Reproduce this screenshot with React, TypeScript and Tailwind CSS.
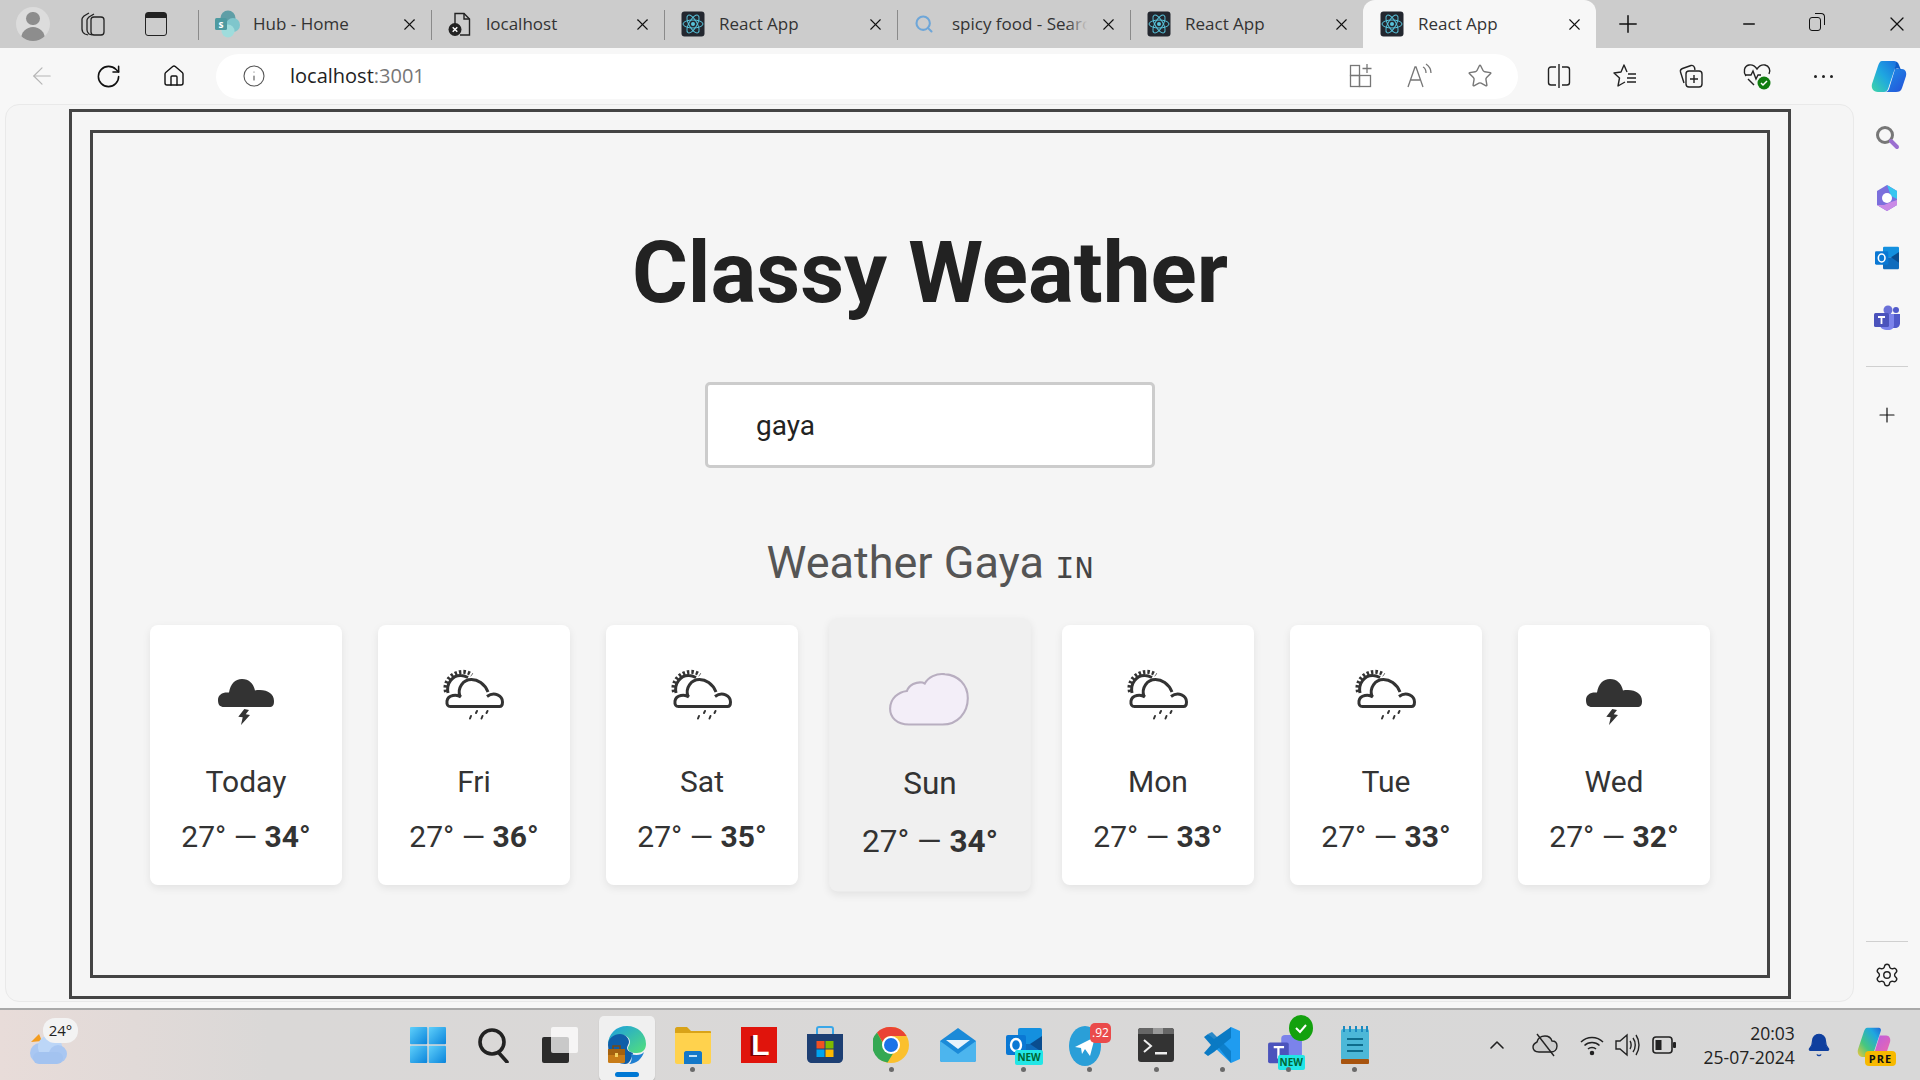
import React from "react";
import { ArrowLeft, RotateCw, Home, Info, Star, Plus, Search, X, Settings, ChevronUp, Minus, Bell } from "lucide-react";

const ui = { fontFamily: '"Open Sans", "Noto Sans", sans-serif' };
const roboto = { fontFamily: 'Roboto, "Liberation Sans", sans-serif' };

function ReactIcon() {
  return (
    <svg width="24" height="26" viewBox="0 0 24 26" className="shrink-0">
      <rect x="0.5" y="0.5" width="23" height="25" rx="3" fill="#23272f" />
      <g fill="none" stroke="#58c4dc" strokeWidth="1">
        <ellipse cx="12" cy="13" rx="10" ry="4" />
        <ellipse cx="12" cy="13" rx="10" ry="4" transform="rotate(60 12 13)" />
        <ellipse cx="12" cy="13" rx="10" ry="4" transform="rotate(120 12 13)" />
      </g>
      <circle cx="12" cy="13" r="2" fill="#58c4dc" />
    </svg>
  );
}

function SharePointIcon() {
  return (
    <svg width="26" height="28" viewBox="0 0 26 28" className="shrink-0">
      <circle cx="13" cy="8" r="7.5" fill="#5f9ea6" />
      <circle cx="18" cy="15" r="7" fill="#7fc6cc" />
      <circle cx="13" cy="21" r="6.5" fill="#9fdcdc" />
      <rect x="0" y="8" width="12" height="12" rx="1.5" fill="#4d9aa0" />
      <text x="6" y="18" textAnchor="middle" fontSize="10" fontWeight="700" fill="#fff" fontFamily="Open Sans">s</text>
    </svg>
  );
}

function FileErrorIcon() {
  return (
    <svg width="24" height="26" viewBox="0 0 24 26" className="shrink-0">
      <path d="M7 13V2.5h9l5.5 5.5v16H12" fill="none" stroke="#222" strokeWidth="1.4" />
      <path d="M16 2.5V8h5.5" fill="none" stroke="#222" strokeWidth="1.4" />
      <circle cx="7" cy="18.5" r="6.5" fill="#222" />
      <path d="M4.7 16.2l4.6 4.6M9.3 16.2l-4.6 4.6" stroke="#fff" strokeWidth="1.4" />
    </svg>
  );
}

function Tab({ icon, label, active, sep = true, fade }: { icon: React.ReactNode; label: string; active?: boolean; sep?: boolean; fade?: boolean }) {
  return (
    <div className={`relative flex h-[48px] w-[233px] shrink-0 items-center pl-[17px] ${active ? "rounded-t-[12px] bg-[#f7f7f7]" : ""}`}>
      {sep && !active ? <div className="absolute left-0 top-[10px] h-[30px] w-px bg-[#8a8a8a]" /> : null}
      <div className="flex w-[38px] shrink-0 items-center">{icon}</div>
      <span className="w-[146px] overflow-hidden whitespace-nowrap text-[17px] text-[#333]" style={ui}>{label}</span>
      {fade ? <div className="absolute left-[170px] top-[8px] h-[32px] w-[34px] bg-[linear-gradient(90deg,rgba(204,204,204,0),#cccccc_60%)]" /> : null}
      <X size={19} strokeWidth={1.4} className="relative ml-[1px] shrink-0 text-[#111]" />
    </div>
  );
}

function CollectionsIcon() {
  return (
    <svg width="26" height="26" viewBox="0 0 26 26" fill="none" stroke="#222" strokeWidth="1.3">
      <path d="M8 24l-3-1C3 22 2 20 2 18V8c0-1 1-2 2-3l5-3" />
      <path d="M12 24l-3-1c-1-1-2-2-2-4V9c0-1 1-2 2-3l5-3" />
      <path d="M17 24h-3c-2 0-3-1-3-3V9c0-2 1-3 3-3h7c2 0 3 1 3 3v12c0 2-1 3-3 3z" />
    </svg>
  );
}

function CopilotIcon({ size = 36 }: { size?: number }) {
  return (
    <svg width={size} height={size} viewBox="0 0 36 36">
      <defs>
        <linearGradient id="cpa" x1="0" y1="1" x2="1" y2="0">
          <stop offset="0" stopColor="#3fd6a6" />
          <stop offset="0.5" stopColor="#1fa7e0" />
          <stop offset="1" stopColor="#1a6fe0" />
        </linearGradient>
        <linearGradient id="cpb" x1="0" y1="0" x2="1" y2="1">
          <stop offset="0" stopColor="#1e90e8" />
          <stop offset="1" stopColor="#2450d8" />
        </linearGradient>
      </defs>
      <path d="M11 3h12c2 0 3 2 2 4l-8 24c-1 2-2 3-4 3H7C2 34 0 30 1 26L7 8c1-3 2-5 4-5z" fill="url(#cpa)" />
      <path d="M24 11h7c3 0 5 3 4 7l-4 12c-1 3-3 4-6 4H14c2 0 3-1 4-3l6-20z" fill="url(#cpb)" />
      <path d="M23 3c2 0 4 1 5 4l2 5c-3-2-6-2-7 1l2-8c0-1 0-2-2-2z" fill="#0c5cc8" />
    </svg>
  );
}

function SplitIcon() {
  return (
    <svg width="24" height="26" viewBox="0 0 24 26" fill="none" stroke="#222" strokeWidth="1.4">
      <path d="M9 4H4C2.5 4 1.5 5 1.5 6.5v13C1.5 21 2.5 22 4 22h5" />
      <path d="M15 4h5c1.5 0 2.5 1 2.5 2.5v13c0 1.5-1 2.5-2.5 2.5h-5" />
      <path d="M12 1v24" />
    </svg>
  );
}

function FavListIcon() {
  return (
    <svg width="26" height="26" viewBox="0 0 26 26" fill="none" stroke="#222" strokeWidth="1.4" strokeLinejoin="round">
      <path d="M15 9L12 2 9 9l-7 1 5.5 5L6 23l7-4" />
      <path d="M16 11h8M15 15h9M15 19h9" />
    </svg>
  );
}

function CollectAddIcon() {
  return (
    <svg width="26" height="26" viewBox="0 0 26 26" fill="none" stroke="#222" strokeWidth="1.4">
      <path d="M6 20L2.5 9C2 7 3 6 4.5 5.5L13 2.5c2-.5 3 .5 3.5 2L17 7" />
      <rect x="8" y="8" width="16" height="16" rx="3" />
      <path d="M16 12v8M12 16h8" />
    </svg>
  );
}

function HeartCheckIcon() {
  return (
    <svg width="30" height="28" viewBox="0 0 30 28" fill="none">
      <path d="M4 14C1 10 2 4 7 3c3-.5 6 1 8 4 2-3 5-4.5 8-4 4 1 6 5 4 9" stroke="#222" strokeWidth="1.4" />
      <path d="M3 13h6l2-4 3 8 2-4h3" stroke="#222" strokeWidth="1.4" />
      <path d="M6 17l6 6" stroke="#222" strokeWidth="1.4" />
      <circle cx="22" cy="21" r="6.5" fill="#107c10" />
      <path d="M19 21l2 2 4-4" stroke="#fff" strokeWidth="1.5" />
    </svg>
  );
}

function AppsPlusIcon() {
  return (
    <svg width="24" height="26" viewBox="0 0 24 26" fill="none" stroke="#777" strokeWidth="1.3">
      <rect x="1.5" y="2.5" width="9" height="10" />
      <rect x="1.5" y="12.5" width="9" height="11" />
      <rect x="10.5" y="12.5" width="11" height="11" />
      <path d="M18 1v9M13.5 5.5h9" />
    </svg>
  );
}

function ReadIcon() {
  return (
    <svg width="28" height="26" viewBox="0 0 28 26" fill="none" stroke="#777" strokeWidth="1.3">
      <path d="M2 24L9 4h1l7 20M5 17h9" />
      <path d="M17 4c2 1 3 3 3 6M20 1c3 2 5 5 5 9" />
    </svg>
  );
}

function NavSlot({ children }: { children: React.ReactNode }) {
  return <div className="flex h-[44px] w-[44px] shrink-0 items-center justify-center">{children}</div>;
}

function SideItem({ children }: { children: React.ReactNode }) {
  return <div className="flex h-[60px] items-center justify-center">{children}</div>;
}

function ThunderIcon() {
  return (
    <svg viewBox="0 0 80 80" className="h-[80px] w-[80px]">
      <g fill="#333">
        <path d="M18 52c-4 0-6-2-6-7 0-5 4-7.5 9-7.5h2C24.5 29 29 24 36 24c7 0 11.5 4.5 13 11.5C50 35 52 35 54 35c8 0 14 4 14 11 0 4-1 6-5 6z" />
        <polygon points="38.3,54 32.3,61.7 36.7,62.3 35,70 44,60 39.7,59.3 43,55" />
      </g>
    </svg>
  );
}

function RainSunIcon() {
  return (
    <svg viewBox="0 0 80 80" className="h-[80px] w-[80px]" fill="none" stroke="#333">
      <path d="M27 42C23 39 14 39.5 13 46c-.5 4 1 5.5 3.5 5.5h49c2.5 0 3-2 3-4.5 0-6-8-11-15.5-5.5" strokeWidth="3" />
      <path d="M26 41.5C23 33 29 24.5 37.5 24.5c6 0 13 4 16.5 12.5" strokeWidth="3" />
      <path d="M14 38C12 28 19 20 27 20.5c3 0 5 1 7 2" strokeWidth="3" />
      <path d="M12 37C9 26 19 15.5 31 17c3 .5 5 1.5 7 3" strokeWidth="4" strokeDasharray="2.4 2" />
      <g stroke="#333" strokeWidth="2" strokeLinecap="round">
        <path d="M43 56l-1 2M53.5 56l-1 2M37 61l-1 2.5M48.5 61l-1 2.5" />
      </g>
    </svg>
  );
}

function CloudIcon() {
  return (
    <svg viewBox="0 0 80 80" className="h-[80px] w-[80px]">
      <path d="M20 71C8 71 2 64 2 56 2 46 10 40 18 39c2-6 9-9 15-8l2 1c3-6 11-10 19-9 13 1 22 10 22 23 0 14-10 25-24 25z" fill="#f3eef8" stroke="#b8aec0" strokeWidth="2" />
    </svg>
  );
}

type Day = { label: string; low: string; high: string; icon: "t" | "r" | "c"; active?: boolean };
const days: Day[] = [
  { label: "Today", low: "27°", high: "34°", icon: "t" },
  { label: "Fri", low: "27°", high: "36°", icon: "r" },
  { label: "Sat", low: "27°", high: "35°", icon: "r" },
  { label: "Sun", low: "27°", high: "34°", icon: "c", active: true },
  { label: "Mon", low: "27°", high: "33°", icon: "r" },
  { label: "Tue", low: "27°", high: "33°", icon: "r" },
  { label: "Wed", low: "27°", high: "32°", icon: "t" },
];

function DayCard({ d }: { d: Day }) {
  return (
    <div className={`flex h-[260px] w-[192px] flex-col items-center rounded-[8px] pt-[30px] text-[#333] shadow-[0_3px_8px_rgba(0,0,0,0.08)] ${d.active ? "scale-105 bg-[#f0f0f0]" : "bg-white"}`}>
      {d.icon === "t" ? <ThunderIcon /> : d.icon === "r" ? <RainSunIcon /> : <CloudIcon />}
      <div className="mt-[29px] text-[30px] leading-[36px]">{d.label}</div>
      <div className="mt-[19px] text-[30px] leading-[36px]">
        {d.low} — <strong className="font-bold">{d.high}</strong>
      </div>
    </div>
  );
}

function Slot({ children, dot, active }: { children: React.ReactNode; dot?: boolean; active?: boolean }) {
  return (
    <div className="relative flex h-[70px] w-[66.2px] shrink-0 items-center justify-center">
      {active ? <div className="absolute bottom-[-1px] left-[5px] top-[6px] w-[56px] rounded-[5px] bg-[#f0f0f0] shadow-[0_1px_1px_rgba(0,0,0,0.2)]" /> : null}
      <div className="relative flex items-center justify-center">{children}</div>
      {dot ? <div className="absolute bottom-[8px] left-[30.5px] h-[5px] w-[5px] rounded-full bg-[#6a6a6a]" /> : null}
      {active ? <div className="absolute bottom-[3px] left-[21px] h-[5px] w-[24px] rounded-full bg-[#0078d4]" /> : null}
    </div>
  );
}

function WinIcon() {
  return (
    <svg width="36" height="36" viewBox="0 0 36 36">
      <defs>
        <linearGradient id="w1" x1="0" y1="0" x2="1" y2="1"><stop offset="0" stopColor="#5fd0fb" /><stop offset="1" stopColor="#0a84db" /></linearGradient>
      </defs>
      <rect x="0" y="0" width="17.3" height="17.3" rx="1" fill="url(#w1)" />
      <rect x="18.7" y="0" width="17.3" height="17.3" rx="1" fill="url(#w1)" />
      <rect x="0" y="18.7" width="17.3" height="17.3" rx="1" fill="url(#w1)" />
      <rect x="18.7" y="18.7" width="17.3" height="17.3" rx="1" fill="url(#w1)" />
    </svg>
  );
}

function TaskSearch() {
  return (
    <svg width="34" height="36" viewBox="0 0 34 36" fill="none" stroke="#222" strokeWidth="3.6">
      <circle cx="15" cy="15" r="12" />
      <path d="M22 26l8 9" strokeLinecap="round" />
    </svg>
  );
}

function TaskView() {
  return (
    <svg width="36" height="36" viewBox="0 0 36 36">
      <rect x="0" y="10" width="27" height="26" rx="2" fill="#2b2b2b" />
      <rect x="9" y="0" width="27" height="26" rx="2" fill="#ffffff" fillOpacity="0.75" />
    </svg>
  );
}

function EdgeIcon() {
  return (
    <svg width="40" height="40" viewBox="0 0 40 40">
      <defs>
        <linearGradient id="e1" x1="0" y1="0" x2="1" y2="1"><stop offset="0" stopColor="#1b9de2" /><stop offset="1" stopColor="#54e07a" /></linearGradient>
      </defs>
      <path d="M20 1c11 0 19 8 19 18 0 6-4 9-9 9-6 0-9-2-9-5 0-2 2-3 2-6 0-4-4-7-8-7C8 10 2 15 1 20 1 9 9 1 20 1z" fill="url(#e1)" />
      <path d="M1 20c0-7 6-11 12-11 5 0 9 4 9 8 0 2-2 4-2 6 0 2 2 4 6 5-2 6-3 11-8 11C8 39 1 30 1 20z" fill="#0f5ea8" />
      <path d="M24 29c5 2 11 1 13-2-2 7-8 12-15 12 3-2 3-6 2-10z" fill="#1f7fd1" />
      <rect x="1" y="24" width="17" height="14" rx="1.5" fill="#c87c18" />
      <rect x="1" y="24" width="17" height="6" fill="#a56210" />
      <path d="M6 24v-3h7v3" fill="none" stroke="#7a4a10" strokeWidth="1.5" />
      <rect x="8" y="28" width="3" height="4" fill="#f4d060" />
    </svg>
  );
}

function FolderIcon() {
  return (
    <svg width="36" height="38" viewBox="0 0 36 38">
      <path d="M0 3c0-1 1-2 2-2h10l4 4h19c.5 0 1 .5 1 1v4H0z" fill="#d9a318" />
      <path d="M0 7h36v29c0 1-1 2-2 2H2c-1 0-2-1-2-2z" fill="#ffd24d" />
      <path d="M9 27c0-1 1-2 2-2h14c1 0 2 1 2 2v11H9z" fill="#1478c8" />
      <rect x="14" y="29" width="8" height="2" fill="#bfe0f5" />
    </svg>
  );
}

function LIcon() {
  return (
    <div className="flex h-[36px] w-[36px] items-center justify-center bg-[#e0140c] pl-[3px] text-[30px] font-bold leading-none text-white" style={{ fontFamily: '"Liberation Sans", sans-serif', textShadow: "-3px 1px 0 #7a0000" }}>L</div>
  );
}

function StoreIcon() {
  return (
    <svg width="36" height="38" viewBox="0 0 36 38">
      <path d="M10 8V3c0-1 1-2 2-2h12c1 0 2 1 2 2v5" fill="none" stroke="#3aa7e8" strokeWidth="2" />
      <path d="M0 8h36v24c0 3-2 5-5 5H5c-3 0-5-2-5-5z" fill="#1d3f73" />
      <rect x="9.5" y="15" width="8" height="7.5" fill="#f25022" />
      <rect x="18.5" y="15" width="8" height="7.5" fill="#7fba00" />
      <rect x="9.5" y="23.5" width="8" height="7.5" fill="#00a4ef" />
      <rect x="18.5" y="23.5" width="8" height="7.5" fill="#ffb900" />
    </svg>
  );
}

function ChromeIcon() {
  return (
    <svg width="36" height="38" viewBox="0 0 36 36">
      <circle cx="18" cy="18" r="18" fill="#fbc02d" />
      <path d="M18 0a18 18 0 0 1 15.6 9H18a9 9 0 0 0-8.5 6L4 5.5A18 18 0 0 1 18 0z" fill="#ea4335" />
      <path d="M4 5.5l8 14.5a9 9 0 0 0 8 6.5L14.5 35.6A18 18 0 0 1 4 5.5z" fill="#34a853" />
      <circle cx="18" cy="18" r="9" fill="#fff" />
      <circle cx="18" cy="18" r="7" fill="#1a73e8" />
    </svg>
  );
}

function MailIcon() {
  return (
    <svg width="36" height="34" viewBox="0 0 36 34">
      <path d="M0 13L18 0l18 13v19c0 1-1 2-2 2H2c-1 0-2-1-2-2z" fill="#1b8ad8" />
      <path d="M6 12h24l-12 9z" fill="#eaf4fb" />
      <path d="M0 13l18 13 18-13v19c0 1-1 2-2 2H2c-1 0-2-1-2-2z" fill="#4cb5ee" />
    </svg>
  );
}

function OutlookIcon({ small }: { small?: boolean }) {
  return (
    <svg width={small ? 24 : 36} height={small ? 24 : 36} viewBox="0 0 36 36">
      <rect x="12" y="1" width="24" height="16" rx="2" fill="#1490df" />
      <path d="M12 17h24v16c0 1-1 2-2 2H14c-1 0-2-1-2-2z" fill="#0f6cbd" />
      <path d="M24 17l12-8v16z" fill="#0a4d8f" />
      <rect x="0" y="8" width="20" height="20" rx="2" fill="#0a78d4" />
      <ellipse cx="10" cy="18" rx="5" ry="6" fill="none" stroke="#fff" strokeWidth="2.4" />
    </svg>
  );
}

function NewBadge() {
  return <span className="absolute bottom-[-2px] right-[-1px] rounded-[2px] bg-[#22e6e6] px-[2px] text-[10px] font-bold leading-[15px] text-[#063]" style={ui}>NEW</span>;
}

function TelegramIcon() {
  return (
    <div className="relative h-[44px] w-[42px]">
      <svg width="32" height="40" viewBox="0 0 32 40" className="mt-[3px]">
        <ellipse cx="16" cy="20" rx="16" ry="20" fill="#2a9fd8" />
        <path d="M6 21L26 11l-5 19-5-7-3 5-1-6z" fill="#fff" />
      </svg>
      <span className="absolute right-0 top-0 rounded-[5px] bg-[#ea4b4b] px-[2px] text-[12px] leading-[20px] text-white" style={ui}>.92</span>
    </div>
  );
}

function TerminalIcon() {
  return (
    <svg width="36" height="34" viewBox="0 0 36 34">
      <rect x="0" y="0" width="36" height="34" rx="3" fill="#333" />
      <path d="M0 3c0-2 1-3 3-3h12v6H0z" fill="#666" />
      <path d="M15 0h10v6H15z" fill="#999" />
      <path d="M25 0h8c2 0 3 1 3 3v3H25z" fill="#666" />
      <path d="M6 12l7 6-7 6" fill="none" stroke="#eee" strokeWidth="2" />
      <rect x="17" y="24" width="12" height="2.5" fill="#eee" />
    </svg>
  );
}

function VSCodeIcon() {
  return (
    <svg width="36" height="38" viewBox="0 0 36 38">
      <path d="M27 1l9 4v28l-9 4-16-15 4-3z" fill="#1f9cf0" />
      <path d="M27 1v11L10 26l-6 4-4-3 7-8-7-8 4-3 6 5z" fill="#0a7ac4" />
      <path d="M27 25v12L4 8l4-2z" fill="#0a7ac4" fillOpacity="0.85" />
    </svg>
  );
}

function TeamsIcon() {
  return (
    <div className="relative h-[48px] w-[44px]">
      <svg width="36" height="32" viewBox="0 0 36 34" className="absolute bottom-[2px] left-0">
        <rect x="14" y="0" width="22" height="34" rx="4" fill="#7b83eb" />
        <rect x="0" y="8" width="22" height="22" rx="2" fill="#4b53bc" />
        <path d="M6 13h11M11 13v12" stroke="#fff" strokeWidth="2.4" />
      </svg>
      <span className="absolute bottom-[-1px] left-[11px] rounded-[2px] bg-[#22e6e6] px-[2px] text-[10px] font-bold leading-[15px] text-[#063]" style={ui}>NEW</span>
      <svg width="24" height="26" viewBox="0 0 24 26" className="absolute right-[-2px] top-[-6px]">
        <ellipse cx="12" cy="13" rx="12" ry="13" fill="#13a10e" />
        <path d="M7 13l4 4 6-7" fill="none" stroke="#fff" strokeWidth="2" />
      </svg>
    </div>
  );
}

function NotepadIcon() {
  return (
    <svg width="28" height="38" viewBox="0 0 28 38">
      <rect x="0" y="3" width="28" height="31" rx="2" fill="#4cb8d8" />
      <rect x="0" y="33" width="28" height="5" rx="1" fill="#a8540f" />
      <path d="M3 0v6M9 0v6M15 0v6M21 0v6M26 0v6" stroke="#1b8ac0" strokeWidth="2" />
      <path d="M6 13h16M6 19h16M6 25h16" stroke="#0e6c8c" strokeWidth="2.2" />
    </svg>
  );
}

function WeatherWidget() {
  return (
    <div className="relative h-[70px] w-[78px]">
      <svg width="38" height="30" viewBox="0 0 38 30" className="absolute left-[29px] top-[24px]">
        <path d="M2 8l8-8 3 7z" fill="#f39c1f" />
        <circle cx="11" cy="19" r="10" fill="#a9c7f2" />
        <circle cx="21" cy="13" r="12" fill="#bcd6f7" />
        <circle cx="29" cy="20" r="9" fill="#a9c7f2" />
        <rect x="4" y="18" width="30" height="12" rx="6" fill="#a3c3f0" />
      </svg>
      <div className="absolute left-[43px] top-[8px] flex h-[25px] w-[35px] items-center justify-center rounded-[12px] bg-[#f3f3f3] text-[15px] text-[#222]" style={ui}>24°</div>
    </div>
  );
}

function TrayCloud() {
  return (
    <svg width="26" height="24" viewBox="0 0 26 24" fill="none" stroke="#222" strokeWidth="1.4">
      <path d="M7 19c-4 0-6-2-6-5s2-4 4-5c1-4 4-6 8-6 3 0 6 2 7 5 3 0 5 2 5 5 0 4-3 6-6 6z" fill="#ccc" />
      <path d="M5 1l17 22" />
    </svg>
  );
}

function WifiIcon() {
  return (
    <svg width="24" height="22" viewBox="0 0 24 22" fill="none" stroke="#222" strokeWidth="1.5">
      <path d="M1 8c6-6 16-6 22 0M4.5 11.5c4-4 11-4 15 0M8 15c2-2 6-2 8 0" />
      <circle cx="12" cy="19" r="1.5" fill="#222" />
    </svg>
  );
}

function VolumeIcon() {
  return (
    <svg width="26" height="24" viewBox="0 0 26 24" fill="none" stroke="#222" strokeWidth="1.4">
      <path d="M1 8v8h4l7 6V2L5 8z" />
      <path d="M15 8c1.5 2 1.5 6 0 8M18 5c3 4 3 10 0 14M21 2c4 6 4 14 0 20" />
    </svg>
  );
}

function BatteryIcon() {
  return (
    <svg width="24" height="18" viewBox="0 0 24 18" fill="none">
      <rect x="1" y="1" width="19" height="16" rx="3" stroke="#222" strokeWidth="1.6" />
      <rect x="3.5" y="4" width="6" height="10" fill="#222" />
      <rect x="21" y="6" width="3" height="6" rx="1" fill="#222" />
    </svg>
  );
}

function CopilotPre() {
  return (
    <div className="relative h-[42px] w-[36px]">
      <svg width="34" height="36" viewBox="0 0 36 36">
        <defs>
          <linearGradient id="cr" x1="0" y1="1" x2="1" y2="0">
            <stop offset="0" stopColor="#f6c73a" />
            <stop offset="0.35" stopColor="#47c77f" />
            <stop offset="0.75" stopColor="#1fa7e0" />
            <stop offset="1" stopColor="#2267d8" />
          </linearGradient>
          <linearGradient id="cs" x1="0" y1="0" x2="1" y2="1">
            <stop offset="0" stopColor="#b45be8" />
            <stop offset="1" stopColor="#f26aa6" />
          </linearGradient>
        </defs>
        <path d="M11 3h12c2 0 3 2 2 4l-8 24c-1 2-2 3-4 3H7C2 34 0 30 1 26L7 8c1-3 2-5 4-5z" fill="url(#cr)" />
        <path d="M24 11h7c3 0 5 3 4 7l-4 12c-1 3-3 4-6 4H14c2 0 3-1 4-3l6-20z" fill="url(#cs)" />
      </svg>
      <span className="absolute bottom-[0px] left-[8px] rounded-[4px] bg-[#f7b900] px-[4px] text-[11px] font-bold leading-[15px] tracking-[1px] text-[#111]" style={ui}>PRE</span>
    </div>
  );
}

function SideIcons() {
  return (
    <div className="flex h-[898px] w-[66px] shrink-0 flex-col items-center pt-[1px]">
      <div className="mt-[3px]">
        <SideItem>
          <svg width="26" height="26" viewBox="0 0 26 26" fill="none">
            <circle cx="11" cy="10" r="7.5" stroke="#777" strokeWidth="3" />
            <path d="M17 16l6 6" stroke="#9b6fd0" strokeWidth="4" strokeLinecap="round" />
          </svg>
        </SideItem>
      </div>
      <SideItem>
        <svg width="26" height="26" viewBox="0 0 26 26">
          <path d="M13 0l10 6v14l-10 6L3 20V6z" fill="#7b6fdc" />
          <path d="M13 0l10 6v8l-6-3z" fill="#37c6f0" />
          <path d="M3 20l10 6 10-6v-5l-6 2-7 3z" fill="#c98ae6" />
          <circle cx="13" cy="13" r="5" fill="#fff" />
        </svg>
      </SideItem>
      <SideItem>
        <OutlookIcon small />
      </SideItem>
      <SideItem>
        <svg width="26" height="26" viewBox="0 0 26 26">
          <circle cx="14" cy="5" r="4.5" fill="#6a70d8" />
          <circle cx="22" cy="5" r="3" fill="#5059c9" />
          <path d="M15 9h11v9c0 3-2 5-5 5h-6z" fill="#5059c9" />
          <path d="M6 9h14v11c0 3-2 5-6 5-5 0-8-2-8-5z" fill="#7b83eb" />
          <rect x="0" y="8" width="15" height="14" rx="1.5" fill="#4b53bc" />
          <path d="M4 12h7M7.5 12v7" stroke="#fff" strokeWidth="1.8" />
        </svg>
      </SideItem>
      <div className="mt-[18px] h-px w-[42px] shrink-0 bg-[#d0d0d0]" />
      <div className="mt-[36px]">
        <Plus size={24} strokeWidth={1.2} className="text-[#111]" />
      </div>
      <div className="mt-auto h-px w-[42px] shrink-0 bg-[#d0d0d0]" />
      <div className="mb-[14px] mt-[20px]">
        <Settings size={26} strokeWidth={1.3} className="text-[#222]" />
      </div>
    </div>
  );
}

export default function App() {
  return (
    <div className="flex h-[1080px] w-[1920px] flex-col overflow-hidden bg-[#f7f7f7]">
      <div className="flex h-[48px] shrink-0 items-center bg-[#cccccc]">
        <div className="flex w-[198px] shrink-0 items-center">
          <div className="ml-[16px] flex h-[34px] w-[34px] flex-col items-center overflow-hidden rounded-full bg-[#dcdcdc]">
            <div className="mt-[5px] h-[14px] w-[14px] rounded-full bg-[#8d8d8d]" />
            <div className="mt-[2px] h-[16px] w-[24px] rounded-t-full bg-[#8d8d8d]" />
          </div>
          <div className="ml-[30px]"><CollectionsIcon /></div>
          <div className="ml-[39px] flex h-[24px] w-[22px] flex-col rounded-[3px] border-[1.5px] border-[#222]">
            <div className="h-[5px] bg-[#222]" />
          </div>
        </div>
        <Tab icon={<SharePointIcon />} label="Hub - Home" />
        <Tab icon={<FileErrorIcon />} label="localhost" />
        <Tab icon={<ReactIcon />} label="React App" />
        <Tab icon={<Search size={20} strokeWidth={2.5} className="text-[#6ea6d8]" />} label="spicy food - Search" fade />
        <Tab icon={<ReactIcon />} label="React App" />
        <Tab icon={<ReactIcon />} label="React App" active />
        <div className="ml-[18px] flex w-[28px] items-center justify-center"><Plus size={28} strokeWidth={1.3} className="text-[#111]" /></div>
        <div className="ml-[95px] flex w-[24px] items-center justify-center"><Minus size={18} strokeWidth={2} className="text-[#111]" /></div>
        <div className="ml-[42px] flex w-[24px] items-center justify-center">
          <div className="relative h-[14px] w-[12px] rounded-[3px] border-[1.5px] border-[#111]">
            <div className="absolute right-[-5px] top-[-5px] h-[12px] w-[10px] rounded-tr-[4px] border-r-[1.5px] border-t-[1.5px] border-[#111]" />
          </div>
        </div>
        <div className="ml-[58px] flex w-[24px] items-center justify-center"><X size={24} strokeWidth={1.3} className="text-[#111]" /></div>
      </div>

      <div className="flex h-[56px] shrink-0 items-center bg-[#f7f7f7] pl-[20px]">
        <NavSlot><ArrowLeft size={28} strokeWidth={1} className="text-[#b5b5b5]" /></NavSlot>
        <div className="ml-[22px]"><NavSlot><RotateCw size={27} strokeWidth={1.4} className="text-[#111]" /></NavSlot></div>
        <div className="ml-[22px]"><NavSlot><Home size={24} strokeWidth={1.4} className="text-[#111]" /></NavSlot></div>
        <div className="ml-[20px] flex h-[45px] w-[1302px] shrink-0 items-center rounded-full bg-white pl-[26px] pr-[25px]">
          <Info size={24} strokeWidth={1.1} className="text-[#555]" />
          <span className="ml-[24px] text-[20px] text-[#222]" style={ui}>localhost<span className="text-[#777]">:3001</span></span>
          <div className="ml-auto flex items-center gap-[33px]">
            <AppsPlusIcon />
            <ReadIcon />
            <Star size={26} strokeWidth={1.3} className="text-[#777]" />
          </div>
        </div>
        <div className="ml-[19px] flex items-center gap-[22px]">
          <NavSlot><SplitIcon /></NavSlot>
          <NavSlot><FavListIcon /></NavSlot>
          <NavSlot><CollectAddIcon /></NavSlot>
          <NavSlot><HeartCheckIcon /></NavSlot>
          <NavSlot>
            <div className="flex gap-[5px]">
              <div className="h-[3px] w-[3px] rounded-full bg-[#222]" />
              <div className="h-[3px] w-[3px] rounded-full bg-[#222]" />
              <div className="h-[3px] w-[3px] rounded-full bg-[#222]" />
            </div>
          </NavSlot>
          <NavSlot><CopilotIcon /></NavSlot>
        </div>
      </div>

      <div className="flex h-[904px] shrink-0 bg-[#f7f7f7]">
        <div className="ml-[5px] h-[898px] w-[1849px] shrink-0 rounded-[14px] border border-[#e9e9e9] bg-[#f5f5f5] pl-[63px] pt-[4px]">
          <div className="h-[890px] w-[1722px] border-[3px] border-[#444] p-[18px]">
            <div className="flex h-[848px] flex-col items-center border-[3px] border-[#444] pt-[90px]" style={roboto}>
              <h1 className="text-[85.5px] font-bold leading-[100px] text-[#222]">Classy Weather</h1>
              <div className="mt-[59px] flex h-[86px] w-[450px] items-center rounded-[5px] border-[3px] border-[#ccc] bg-white pl-[48px] pt-[2px] text-[28px] text-[#222]">gaya</div>
              <h2 className="mt-[65px] text-[45px] font-normal leading-[60px] text-[#555]">
                Weather Gaya <span className="text-[32px] font-normal text-[#444]" style={{ fontFamily: '"Liberation Mono", monospace' }}>IN</span>
              </h2>
              <div className="mt-[25px] flex gap-[36px]">
                {days.map((d) => <DayCard key={d.label} d={d} />)}
              </div>
            </div>
          </div>
        </div>
        <SideIcons />
      </div>

      <div className="flex h-[72px] shrink-0 items-center border-t-2 border-[#a9a9a9] bg-[linear-gradient(90deg,#e8dcd9_0%,#dad8d7_14%,#d8d8d8_100%)]">
        <div className="w-[395px] shrink-0"><WeatherWidget /></div>
        <Slot><WinIcon /></Slot>
        <Slot><TaskSearch /></Slot>
        <Slot><TaskView /></Slot>
        <Slot active><EdgeIcon /></Slot>
        <Slot dot><FolderIcon /></Slot>
        <Slot><LIcon /></Slot>
        <Slot><StoreIcon /></Slot>
        <Slot dot><ChromeIcon /></Slot>
        <Slot><MailIcon /></Slot>
        <Slot dot><div className="relative"><OutlookIcon /><NewBadge /></div></Slot>
        <Slot dot><TelegramIcon /></Slot>
        <Slot dot><TerminalIcon /></Slot>
        <Slot dot><VSCodeIcon /></Slot>
        <Slot dot><TeamsIcon /></Slot>
        <Slot dot><NotepadIcon /></Slot>
        <div className="ml-[91px] flex w-[36px] shrink-0 justify-center"><ChevronUp size={24} strokeWidth={1.6} className="text-[#222]" /></div>
        <div className="flex w-[60px] shrink-0 justify-center"><TrayCloud /></div>
        <div className="flex w-[34px] shrink-0 justify-center"><WifiIcon /></div>
        <div className="flex w-[38px] shrink-0 justify-center"><VolumeIcon /></div>
        <div className="flex w-[34px] shrink-0 justify-center"><BatteryIcon /></div>
        <div className="w-[114px] shrink-0 text-right text-[17.5px] leading-[24px] text-[#222]" style={ui}>
          <div>20:03</div>
          <div>25-07-2024</div>
        </div>
        <div className="flex w-[48px] shrink-0 justify-center"><Bell size={26} strokeWidth={1} fill="#0f3f9e" className="text-[#0f3f9e]" /></div>
        <div className="flex w-[64px] shrink-0 justify-center"><CopilotPre /></div>
      </div>
    </div>
  );
}
